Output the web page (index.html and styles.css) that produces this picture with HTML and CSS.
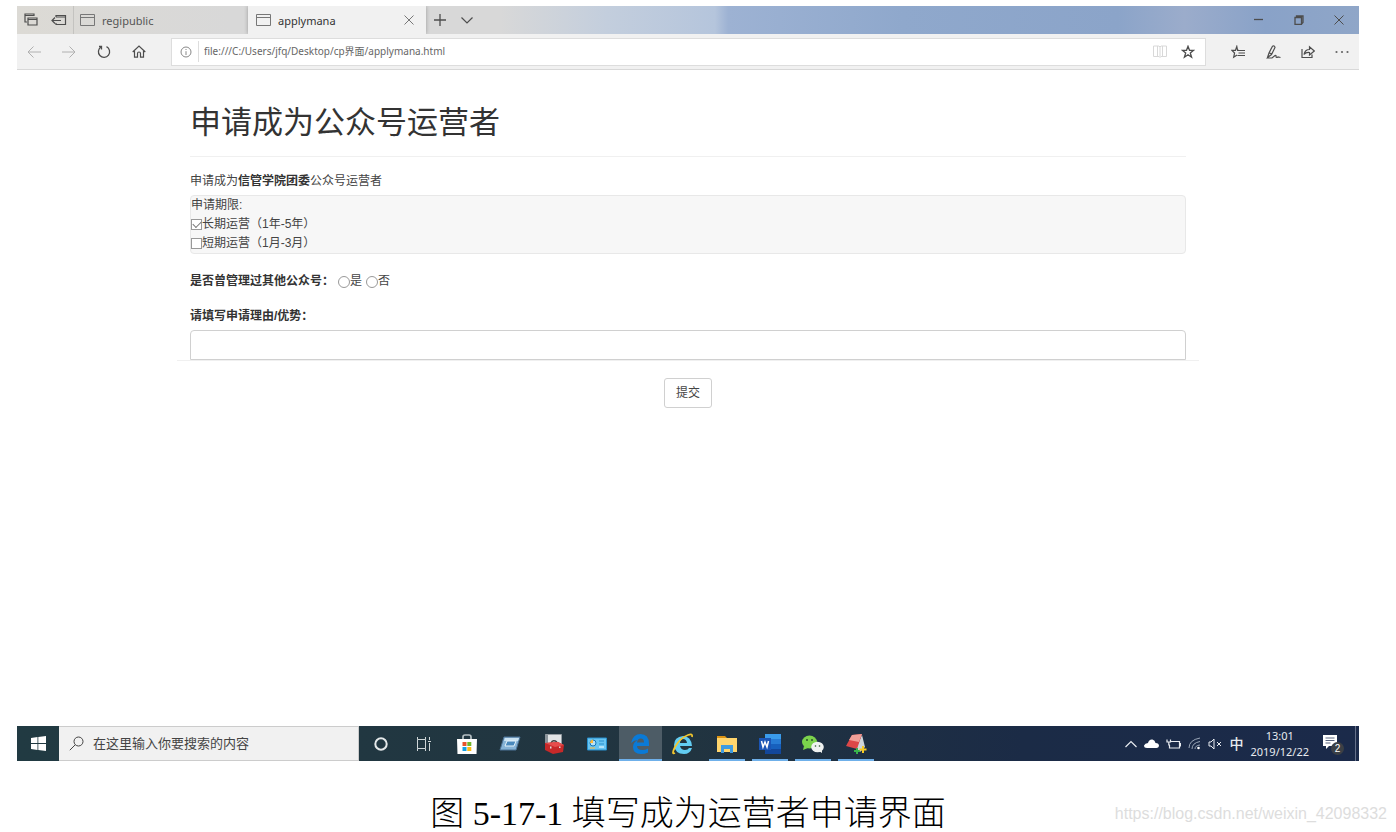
FILE: index.html
```html
<!DOCTYPE html>
<html lang="zh-CN">
<head>
<meta charset="utf-8">
<title>applymana</title>
<link rel="stylesheet" href="styles.css">
</head>
<body>
<figure class="figure">
<div class="desktop">
  <header class="tabs">
    <div class="tab-tools">
      <button class="icon-btn" aria-label="标签页"><svg width="14" height="14" viewBox="0 0 14 14"><path d="M3 9H1V1h9v2M1 2.500h9M4 5h9v7H4zM4 6.500h9" stroke-width="1.200"/></svg></button>
      <button class="icon-btn" aria-label="搁置标签页"><svg width="16" height="14" viewBox="0 0 16 14"><path d="M5 4V2.500h9.500v9H5V10M5 4h9.500M1 7.500h9M4 4.500l-3 3 3 3" stroke-width="1.200"/></svg></button>
    </div>
    <div class="tab"><svg width="15" height="12" viewBox="0 0 15 12"><path d="M.5.5h14v11H.5zM.5 3.500h14"/></svg><span>regipublic</span></div>
    <div class="tab tab-active"><svg width="15" height="12" viewBox="0 0 15 12"><path d="M.5.5h14v11H.5zM.5 3.500h14"/></svg><span class="tab-name">applymana</span>
      <button class="icon-btn" aria-label="关闭标签页"><svg width="10" height="10" viewBox="0 0 10 10"><path d="M.5.5l9 9M9.500.5l-9 9"/></svg></button></div>
    <div class="tab-new">
      <button class="icon-btn" aria-label="新建标签页"><svg width="12" height="12" viewBox="0 0 12 12"><path d="M6 0v12M0 6h12" stroke-width="1.300"/></svg></button>
      <button class="icon-btn" aria-label="预览"><svg width="12" height="7" viewBox="0 0 12 7"><path d="M.5.5L6 6 11.500.5" stroke-width="1.200"/></svg></button>
    </div>
    <div class="window-tools">
      <button class="icon-btn" aria-label="最小化"><svg width="10" height="10" viewBox="0 0 10 10"><path d="M0 4.500h9" stroke-width="1.300"/></svg></button>
      <button class="icon-btn" aria-label="还原"><svg width="10" height="10" viewBox="0 0 10 10"><path d="M1 2.500h6.500v7H1zM2.500 2.500V1h6.500v6.500L7.500 9" stroke-width="1.300"/></svg></button>
      <button class="icon-btn" aria-label="关闭"><svg width="10" height="10" viewBox="0 0 10 10"><path d="M.5.5l9 9M9.500.5l-9 9"/></svg></button>
    </div>
  </header>

  <nav class="toolbar">
    <div class="nav-tools">
      <button class="icon-btn faded" aria-label="后退"><svg width="14" height="12" viewBox="0 0 14 12"><path d="M14 6H1M6.500.5L1 6l5.500 5.500"/></svg></button>
      <button class="icon-btn faded" aria-label="前进"><svg width="14" height="12" viewBox="0 0 14 12"><path d="M0 6h13M7.500.5L13 6l-5.500 5.500"/></svg></button>
      <button class="icon-btn" aria-label="刷新"><svg width="14" height="14" viewBox="0 0 14 14"><path d="M4 2A5.600 5.600 0 1 0 9.500 1.700M2 1.500h2.500V4.500" stroke-width="1.300"/></svg></button>
      <button class="icon-btn" aria-label="主页"><svg width="14" height="13" viewBox="0 0 14 13"><path d="M.7 7L7 1l6.300 6M2.500 6v6.200h3V8.500a1.500 1.500 0 0 1 3 0v3.700h3V6" stroke-width="1.200"/></svg></button>
    </div>
    <div class="address">
      <svg width="12" height="12" viewBox="0 0 12 12"><circle cx="6" cy="6" r="5"/><path d="M6 5.200V9M6 3v1"/></svg>
      <input class="address-input" type="text" aria-label="地址" value="file:///C:/Users/jfq/Desktop/cp界面/applymana.html">
      <button class="icon-btn pale" aria-label="阅读视图"><svg width="14" height="13" viewBox="0 0 14 13"><path d="M.5 1H6l1 1 1-1h5.500v10.500H8l-1 1-1-1H.5zM7 2v10M4.500 1v10M9.500 1v10"/></svg></button>
      <button class="icon-btn" aria-label="收藏"><svg width="14" height="14" viewBox="0 0 14 14"><path d="M7 1.300l1.500 4h4.200L9.300 7.900l1.300 4.300L7 9.700l-3.600 2.500 1.300-4.300L1.300 5.300h4.200z" stroke-width="1.300"/></svg></button>
    </div>
    <div class="page-tools">
      <button class="icon-btn" aria-label="收藏夹"><svg width="15" height="14" viewBox="0 0 15 14"><path d="M8 5.300H6.600L5.800 1.500 4.500 5.300H.9L3.600 8l-.9 4.200L6 10M8 5.500h6M7.500 8H14M6.500 10.500H14" stroke-width="1.200"/></svg></button>
      <button class="icon-btn" aria-label="添加笔记"><svg width="15" height="14" viewBox="0 0 15 14"><path d="M1.500 12.500L3 8 6.500 1.200Q8.500.3 9 2.500L5.500 9.500zM1 13h5l3-2.500q1.500-.5 1 1.500.5 1 2 0l2.500.5M3.500 8L6 9" stroke-width="1.200"/></svg></button>
      <button class="icon-btn" aria-label="共享"><svg width="14" height="14" viewBox="0 0 14 14"><path d="M1 4v8.500h10V9.500M3 9.500Q4 4.500 8.500 4.500V1.800L13.300 6 8.500 10V7.500Q5 7 3 9.500z" stroke-width="1.200"/></svg></button>
      <button class="icon-btn" aria-label="更多"><svg width="14" height="4" viewBox="0 0 14 4"><g fill="#666" stroke="none"><circle cx="1.500" cy="2" r="1.100"/><circle cx="7" cy="2" r="1.100"/><circle cx="12.500" cy="2" r="1.100"/></g></svg></button>
    </div>
  </nav>

  <main class="page">
    <h1 class="title">申请成为公众号运营者</h1>
    <form class="form">
      <p class="intro">申请成为<strong>信管学院团委</strong>公众号运营者</p>
      <div class="well" role="group" aria-label="申请期限">
        <div>申请期限:</div>
        <label class="choice"><input class="box" type="checkbox" checked>长期运营（1年-5年）</label>
        <label class="choice"><input class="box" type="checkbox">短期运营（1月-3月）</label>
      </div>
      <div class="question" role="group" aria-label="是否曾管理过其他公众号">
        <strong>是否曾管理过其他公众号：</strong>
        <label class="choice"><input class="dot" type="radio" name="managed">是</label>
        <label class="choice"><input class="dot" type="radio" name="managed">否</label>
      </div>
      <label class="reason-label" for="reason">请填写申请理由/优势：</label>
      <div class="reason-row"><textarea class="reason" id="reason" rows="1"></textarea></div>
      <button class="submit" type="button">提交</button>
    </form>
  </main>

  <footer class="taskbar">
    <button class="start" aria-label="开始"><svg width="15" height="15" viewBox="0 0 15 15"><path fill="#fff" stroke="none" d="M0 2l6.500-1v6H0zM7.300.9L15 0v7H7.300zM0 8h6.500v6L0 13zM7.300 8H15v7l-7.700-1z"/></svg></button>
    <label class="search"><svg width="15" height="15" viewBox="0 0 15 15"><circle cx="9.500" cy="5.500" r="4.500"/><path d="M6.200 8.800L.8 14.200"/></svg><input class="search-input" type="text" placeholder="在这里输入你要搜索的内容" aria-label="搜索"></label>
    <div class="apps">
      <button class="app" aria-label="Cortana"><svg width="16" height="16" viewBox="0 0 16 16"><circle cx="8" cy="8" r="5.700" stroke="#e4e8e9" stroke-width="2"/></svg></button>
      <button class="app" aria-label="任务视图"><svg width="16" height="16" viewBox="0 0 16 16"><path d="M1.500 1v2.500h8V1M1.500 15v-2.500h8V15M1.500 3.500v9M9.500 3.500v9M13.500 1v3M13.500 7v8M12 5.500h3" stroke="#cfd6d8"/></svg></button>
      <button class="app" aria-label="应用商店"><svg width="22" height="22" viewBox="0 0 22 22"><path d="M7 7V4q0-2 2-2h4q2 0 2 2v3" stroke="#b6c0c4" stroke-width="1.700"/><path fill="#fff" stroke="none" d="M1 6h20l-.5 15h-19z"/><path fill="#e8532b" stroke="none" d="M6.500 9h4v4h-4z"/><path fill="#72b62b" stroke="none" d="M11.300 9h4v4h-4z"/><path fill="#159fe4" stroke="none" d="M6.500 14h4v4h-4z"/><path fill="#fdbb13" stroke="none" d="M11.300 14h4v4h-4z"/></svg></button>
      <button class="app" aria-label="运行"><svg width="22" height="20" viewBox="0 0 22 20"><path fill="#86b3d6" stroke="#4c7396" d="M5 3h16l-4 13H1z"/><path fill="#c9e2f2" stroke="none" d="M6 4h14l-1 3H5z"/><path fill="#4a89bc" stroke="#e4f2fa" d="M8 7h9l-2 5H6z"/></svg></button>
      <button class="app" aria-label="工具箱"><svg width="22" height="22" viewBox="0 0 22 22"><path fill="#e2e5e7" stroke="#939ba1" d="M2.500 1.500h16v14h-16z"/><path fill="#8a939a" stroke="none" d="M2 2h3v9H2z"/><path d="M8 10q2-4 6-1" stroke="#444" stroke-width="1.500"/><path fill="#c62929" stroke="none" d="M2 10l13-1 6 3-1 7-10 2-8-4z"/><path fill="#e64d4c" stroke="none" d="M2 10l13-1 6 3-9 2z"/><path fill="#ddd" stroke="none" d="M7 13.500h1.500v2H7zM16 13.500h1.500v1.500H16z"/></svg></button>
      <button class="app" aria-label="控制面板"><svg width="20" height="16" viewBox="0 0 20 16"><path fill="#69c5f2" stroke="#268fcd" d="M.5 2h19v12H.5z"/><circle cx="6" cy="7" r="3" fill="#b5e2f8" stroke="#1676b7"/><path fill="#ffb938" stroke="none" d="M6 3.500V7H3q0-3 3-3.500z"/><path d="M12 5h5M12 8h5" stroke="#2d8fcb"/><path d="M3 12h5" stroke="#ffb938"/><path d="M12 11h5" stroke="#fff"/></svg></button>
      <button class="app app-active" aria-label="Edge"><svg width="18" height="20" viewBox="0 0 18 20"><path fill="#0a7ad7" stroke="none" d="M0 9Q2 0 9.500 0 18 0 18 10v2H6q0 4 5.500 4 3 0 5.500-1.500v4Q14 20 10 20 2 20 2 13q0-5 5-7Q3 6 0 9zM6 8.500h7Q13 4.500 9.800 4.500 6.500 4.500 6 8.500z"/></svg></button>
      <button class="app" aria-label="Internet Explorer"><svg width="22" height="22" viewBox="0 0 22 22"><path fill="#62cdf3" stroke="none" d="M2 12Q2 4 11 3q8 0 9 10H8q1 4 5 4 3 0 4-2h3q-2 6-8 6Q3 21 2 12zm6-2h7q-.5-4-4-4-3 0-3 4z"/><path d="M3 20Q-1 22 3 14 8 5 16 2q5-2 4 2" stroke="#f2c62d" stroke-width="1.800"/></svg></button>
      <button class="app app-open" aria-label="文件资源管理器"><svg width="20" height="18" viewBox="0 0 20 18"><path fill="#dc9313" stroke="none" d="M0 1h8l2 2H0z"/><path fill="#ffd56d" stroke="none" d="M0 3h20v14H0z"/><path fill="#3f9be0" stroke="none" d="M4 10h12v8h-3v-4H7v4H4z"/></svg></button>
      <button class="app app-open" aria-label="Word"><svg width="22" height="20" viewBox="0 0 22 20"><path fill="#3a9bea" stroke="none" d="M6 0h16v5H6z"/><path fill="#277bd4" stroke="none" d="M6 5h16v5H6z"/><path fill="#1760bd" stroke="none" d="M6 10h16v5H6z"/><path fill="#12479b" stroke="none" d="M6 15h16v5H6z"/><path fill="#1b55b5" stroke="none" d="M0 4h12v12H0z"/><path d="M2.500 7l1.500 6 2-5 2 5 1.500-6" stroke="#fff" stroke-width="1.500"/></svg></button>
      <button class="app app-open" aria-label="微信"><svg width="22" height="20" viewBox="0 0 22 20"><ellipse cx="7.500" cy="8" rx="7.500" ry="6.500" fill="#7bd34c" stroke="none"/><path fill="#7bd34c" stroke="none" d="M2 12l-1 4 5-2z"/><ellipse cx="15.500" cy="13" rx="6.300" ry="5.300" fill="#f0f2f1" stroke="none"/><path fill="#f0f2f1" stroke="none" d="M17 17l3 2v-3z"/><g fill="#28552a" stroke="none"><circle cx="5" cy="6" r="1"/><circle cx="10" cy="6" r="1"/><circle cx="13.500" cy="12" r=".8"/><circle cx="17.500" cy="12" r=".8"/></g></svg></button>
      <button class="app app-open" aria-label="词典"><svg width="22" height="22" viewBox="0 0 22 22"><path fill="#cfd5da" stroke="none" d="M17 2l3 12-5 5-4-4z"/><path fill="#dc4748" stroke="none" d="M7 2l10-1-5 15L1 13z"/><path fill="#f1a098" stroke="none" d="M7 2l10-1-3 8-10-2z"/><path d="M12 15v6M9 18h6" stroke="#38b44b" stroke-width="2"/><path d="M18 13v7M14.500 16.500h7" stroke="#f7cb24" stroke-width="2"/></svg></button>
    </div>
    <div class="tray">
      <svg width="12" height="8" viewBox="0 0 12 8"><path d="M.5 7L6 1.500 11.500 7" stroke-width="1.200"/></svg>
      <svg width="15" height="10" viewBox="0 0 15 10"><path fill="#fff" stroke="none" d="M3 9Q0 9 0 6.500 1 4 4 4 5 0 8.500.5 11 1 11.500 4 15 4 15 7q-.5 2-2.500 2z"/></svg>
      <svg width="15" height="12" viewBox="0 0 15 12"><path d="M5 3.500h8.500V10H3.500V7M1 1.500v2.500h3.500V1.500M2.800 4v3H4M13.500 5.500h1v2.500h-1" stroke-width="1.200"/></svg>
      <svg width="13" height="13" viewBox="0 0 13 13"><g stroke="#9ba7b8"><path d="M1 11Q1 3 12 1M4 12Q4 6 12 4.500M7 12q0-3.500 5-4"/></g><circle cx="10.500" cy="11" r="1.300" fill="#fff" stroke="none"/></svg>
      <svg width="14" height="12" viewBox="0 0 14 12"><path d="M1 4h2l3-3v10L3 8H1zM9 4l4 4M13 4L9 8"/></svg>
      <span class="ime">中</span>
      <time class="clock" datetime="2019-12-22T13:01"><span>13:01</span><span>2019/12/22</span></time>
      <button class="notice" aria-label="通知"><svg width="22" height="22" viewBox="0 0 22 22"><path fill="#fff" stroke="none" d="M1 2h14v11H7l-3 3v-3H1z"/><path d="M3.500 5h9M3.500 7.500h9M3.500 10h5" stroke="#5a6680"/></svg><span class="badge">2</span></button>
    </div>
  </footer>
</div>
<figcaption class="caption">图 <span class="figure-number">5-17-1</span> 填写成为运营者申请界面</figcaption>
</figure>
<div class="watermark">https://blog.csdn.net/weixin_42098332</div>
</body>
</html>
```
FILE: styles.css
```css
* { box-sizing: border-box; }
body {
  margin: 0;
  padding: 6px 0 0;
  overflow: hidden;
  background: #fff;
  color: #444;
  font-family: "Liberation Sans", "Noto Sans CJK SC", sans-serif;
  font-size: 12px;
}
button, input, textarea { font: inherit; color: inherit; }
button { padding: 0; border: 0; background: none; }
svg { display: block; flex: none; fill: none; stroke: currentColor; }
strong { color: #333; }
.figure { margin: 0 37px 0 17px; }

.tabs {
  display: flex;
  height: 28px;
  font-family: "Noto Sans", "Noto Sans CJK SC", sans-serif;
  font-size: 11px;
  background: linear-gradient(90deg, #dcdad5 0, #d8d8d8 16%, #d8d8d8 36%, #c3cedd 44%, #b5c5dc 52%, #9db2d3 53%, #8fa8cc 66%, #8ba4c9 82%, #9baccb 87%, #89a2c8 93%, #8fa6c8 100%);
}
.icon-btn { display: flex; align-items: center; justify-content: center; color: #4d4d4d; }
.tab-tools { display: flex; align-items: center; gap: 13px; width: 57px; padding-left: 7px; border-right: 1px solid #c4c3c0; }
.tab { display: flex; align-items: center; gap: 7px; width: 174px; padding-left: 6px; color: #555; }
.tab svg { color: #777; }
.tab-active { width: 178px; padding-right: 12px; padding-left: 8px; background: #f1f1f1; box-shadow: 0 0 4px #999; clip-path: inset(0 -4px); color: #333; }
.tab-name { flex: 1; }
.tab-new { display: flex; align-items: center; gap: 15px; padding-left: 8px; }
.window-tools { display: flex; align-items: center; gap: 30px; margin-left: auto; padding-right: 15px; }

.toolbar { display: flex; align-items: center; height: 36px; background: #f1f1f1; border-bottom: 1px solid #d8d8d8; }
.nav-tools { display: flex; align-items: center; gap: 21px; width: 154px; padding-left: 10px; }
.icon-btn.faded { color: #b0b0b0; }
.icon-btn.pale { color: #d8d8d8; }
.address { display: flex; flex: 1; align-items: center; gap: 14px; height: 28px; padding: 0 10px 0 8px; border: 1px solid #ddd; background: #fff; color: #888; }
.address-input { flex: 1; height: 21px; min-width: 0; margin-left: -8px; padding: 0 0 3px 5px; border: 0; border-left: 1px solid #ddd; background: none; color: #666; font-family: "Noto Sans", "Noto Sans CJK SC", sans-serif; font-size: 10px; }
.page-tools { display: flex; align-items: center; gap: 20px; padding: 0 10px 0 25px; }

.page { min-height: 656px; padding: 34px 173px 0; }
.title { margin: 0 0 15px; padding-bottom: 14px; border-bottom: 1px solid #f0f0f0; color: #333; font-size: 31px; font-weight: 400; line-height: 38px; }
.form { display: flex; flex-direction: column; line-height: 19px; }
.intro { margin: 0 0 4px; }
.well { border: 1px solid #e8e8e8; border-radius: 4px; background: #f7f7f7; }
.choice { display: flex; align-items: center; }
.box, .dot { appearance: none; flex: none; width: 11px; height: 11px; margin: 0; border: 1px solid #999; background: #fff; }
.dot { width: 12px; height: 12px; border-radius: 50%; }
.box { position: relative; }
.box:checked::after { content: ""; position: absolute; top: 1px; left: 1px; width: 7px; height: 4px; border: solid #777; border-width: 0 0 1px 1px; transform: rotate(-45deg); }
.question { display: flex; gap: 4px; margin-top: 18px; }
.reason-label { margin-top: 16px; color: #333; font-weight: 700; }
.reason-row { margin: 4px -13px 0; padding: 0 13px; border-bottom: 1px solid #f0f0f0; }
.reason { display: block; width: 100%; height: 30px; border: 1px solid #d0d0d0; border-radius: 4px 4px 0 0; resize: none; background: #fff; }
.submit { align-self: center; width: 48px; height: 30px; margin-top: 17px; border: 1px solid #d0d0d0; border-radius: 3px; background: #fff; }

.taskbar { display: flex; height: 35px; background: linear-gradient(90deg, #213a42 0, #213440 50%, #1b2b46 75%, #1b2a4a 100%); color: #fff; }
.start { display: flex; align-items: center; justify-content: center; width: 42px; }
.search { display: flex; align-items: center; gap: 9px; width: 300px; padding-left: 10px; border: 1px solid #ccc; border-left: 0; background: #f1f1f1; color: #444; }
.search-input { flex: 1; min-width: 0; padding: 0; border: 0; background: none; font-size: 13px; }
.search-input::placeholder { color: #444; opacity: 1; }
.apps { display: grid; grid-template-columns: repeat(12, 1fr); width: 519px; }
.app { display: flex; align-items: center; justify-content: center; }
.app-open { background: linear-gradient(#6fb0ea, #6fb0ea) center bottom / 36px 2px no-repeat; }
.app-active { border-bottom: 2px solid #6fb0ea; padding-top: 2px; background: #4d5c66; }
.tray { display: flex; align-items: center; gap: 7px; margin-left: auto; margin-right: 3px; padding-right: 11px; border-right: 1px solid #66718a; color: #e8ebf0; }
.ime { font-size: 14px; line-height: 20px; font-weight: 500; }
.clock { display: flex; flex-direction: column; align-items: center; font-family: "Noto Sans", sans-serif; font-size: 11px; line-height: 16px; }
.notice { position: relative; margin-left: 6px; }
.badge { position: absolute; right: 0; bottom: 0; width: 13px; height: 13px; border-radius: 50%; background: #3c4045; color: #fff; font-size: 10px; line-height: 13px; text-align: center; }

.caption { margin-top: 30px; color: #000; text-align: center; font-family: "Liberation Serif", "Noto Sans CJK SC", serif; font-size: 34px; font-weight: 300; line-height: 46px; white-space: nowrap; }
.figure-number { font-weight: 400; }
.watermark { position: absolute; right: 9px; bottom: 9px; color: #ddd; font-size: 16px; line-height: 18px; }
```
